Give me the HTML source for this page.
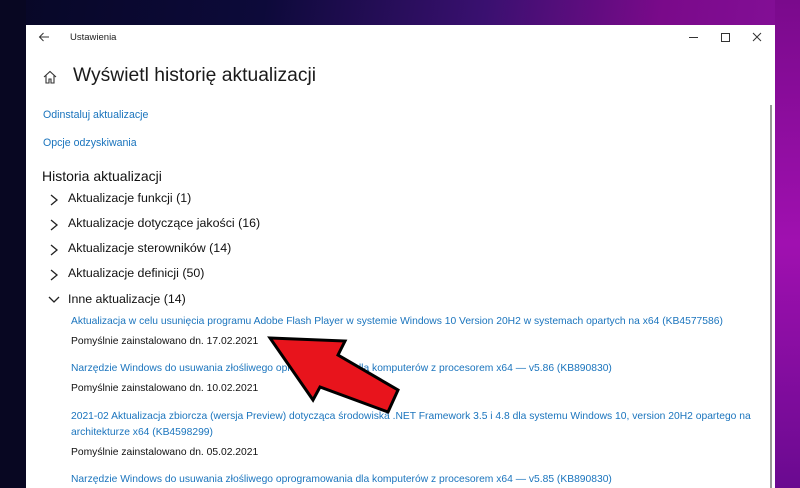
<!DOCTYPE html>
<html><head><meta charset="utf-8"><style>
html,body{margin:0;width:800px;height:488px;overflow:hidden;}
body{position:relative;font-family:"Liberation Sans",sans-serif;
background:linear-gradient(100deg,#070726 0%,#0d0a3a 30%,#3a1070 55%,#7a0a8a 75%,#8a12a0 100%);}
.win{position:absolute;left:26px;top:25px;width:749px;height:463px;background:#fff;overflow:hidden;}
.t{position:absolute;white-space:nowrap;}
.lnk{color:#1a74bd;}
.h{color:#111;}
</style></head><body>
<div style="position:absolute;left:0;top:0;width:26px;height:488px;background:#080722"></div>
<div style="position:absolute;left:775px;top:0;width:25px;height:488px;background:linear-gradient(180deg,#7a0a8c,#a010b0 50%,#6a0a90)"></div>
<div class="win">
<svg style="position:absolute;left:12px;top:6px" width="12" height="12" viewBox="0 0 12 12"><path d="M11 6H1.5M5.5 2L1.5 6L5.5 10" stroke="#333" stroke-width="1" fill="none"/></svg>
<div class="t" style="left:44px;top:7px;font-size:9.5px;color:#222">Ustawienia</div>
<svg style="position:absolute;left:662px;top:6px" width="90" height="12" viewBox="0 0 90 12"><path d="M1 6.5H10" stroke="#333"/><path d="M33.5 2.5h8v8h-8z" stroke="#333" fill="none"/><path d="M65 2L73 10M73 2L65 10" stroke="#333"/></svg>
<svg style="position:absolute;left:17px;top:45px" width="14" height="14" viewBox="0 0 14 14"><path d="M1 7L7 1.5L13 7M3 5.5V13H6V9H8V13H11V5.5" stroke="#333" stroke-width="1.1" fill="none"/></svg>
<div class="t h" style="left:47px;top:40px;font-size:19.3px;color:#1a1a1a">Wyświetl historię aktualizacji</div>
<div class="t lnk" style="left:17px;top:84px;font-size:10.6px">Odinstaluj aktualizacje</div>
<div class="t lnk" style="left:17px;top:112px;font-size:10.6px">Opcje odzyskiwania</div>
<div class="t h" style="left:16px;top:143px;font-size:14px">Historia aktualizacji</div>
<svg style="position:absolute;left:22px;top:167px" width="14" height="140" viewBox="0 0 14 140"><g stroke="#222" stroke-width="1.3" fill="none"><path d="M3 3L9 8L3 13"/><path d="M3 28L9 33L3 38"/><path d="M3 53L9 58L3 63"/><path d="M3 78L9 83L3 88"/><path d="M1 105L6 110L11 105"/></g></svg>
<div class="t h" style="left:42px;top:166px;font-size:12.4px">Aktualizacje funkcji (1)</div>
<div class="t h" style="left:42px;top:191px;font-size:12.4px">Aktualizacje dotyczące jakości (16)</div>
<div class="t h" style="left:42px;top:216px;font-size:12.4px">Aktualizacje sterowników (14)</div>
<div class="t h" style="left:42px;top:241px;font-size:12.4px">Aktualizacje definicji (50)</div>
<div class="t h" style="left:42px;top:267px;font-size:12.4px">Inne aktualizacje (14)</div>
<div class="t lnk" style="left:45px;top:291px;font-size:10.3px">Aktualizacja w celu usunięcia programu Adobe Flash Player w systemie Windows 10 Version 20H2 w systemach opartych na x64 (KB4577586)</div>
<div class="t h" style="left:45px;top:311px;font-size:10.3px">Pomyślnie zainstalowano dn. 17.02.2021</div>
<div class="t lnk" style="left:45px;top:338px;font-size:10.3px">Narzędzie Windows do usuwania złośliwego oprogramowania dla komputerów z procesorem x64 — v5.86 (KB890830)</div>
<div class="t h" style="left:45px;top:358px;font-size:10.3px">Pomyślnie zainstalowano dn. 10.02.2021</div>
<div class="t lnk" style="left:45px;top:386px;font-size:10.3px">2021-02 Aktualizacja zbiorcza (wersja Preview) dotycząca środowiska .NET Framework 3.5 i 4.8 dla systemu Windows 10, version 20H2 opartego na</div>
<div class="t lnk" style="left:45px;top:402px;font-size:10.3px">architekturze x64 (KB4598299)</div>
<div class="t h" style="left:45px;top:422px;font-size:10.3px">Pomyślnie zainstalowano dn. 05.02.2021</div>
<div class="t lnk" style="left:45px;top:449px;font-size:10.3px">Narzędzie Windows do usuwania złośliwego oprogramowania dla komputerów z procesorem x64 — v5.85 (KB890830)</div>
<div style="position:absolute;left:744px;top:80px;width:2px;height:400px;background:#999"></div>
</div>
<svg style="position:absolute;left:0;top:0" width="800" height="488"><path d="M270 338L345 341L338 355L398 390L388 412L320 387L313 400Z" fill="#e8141c" stroke="#000" stroke-width="3" stroke-linejoin="miter"/></svg>
</body></html>
